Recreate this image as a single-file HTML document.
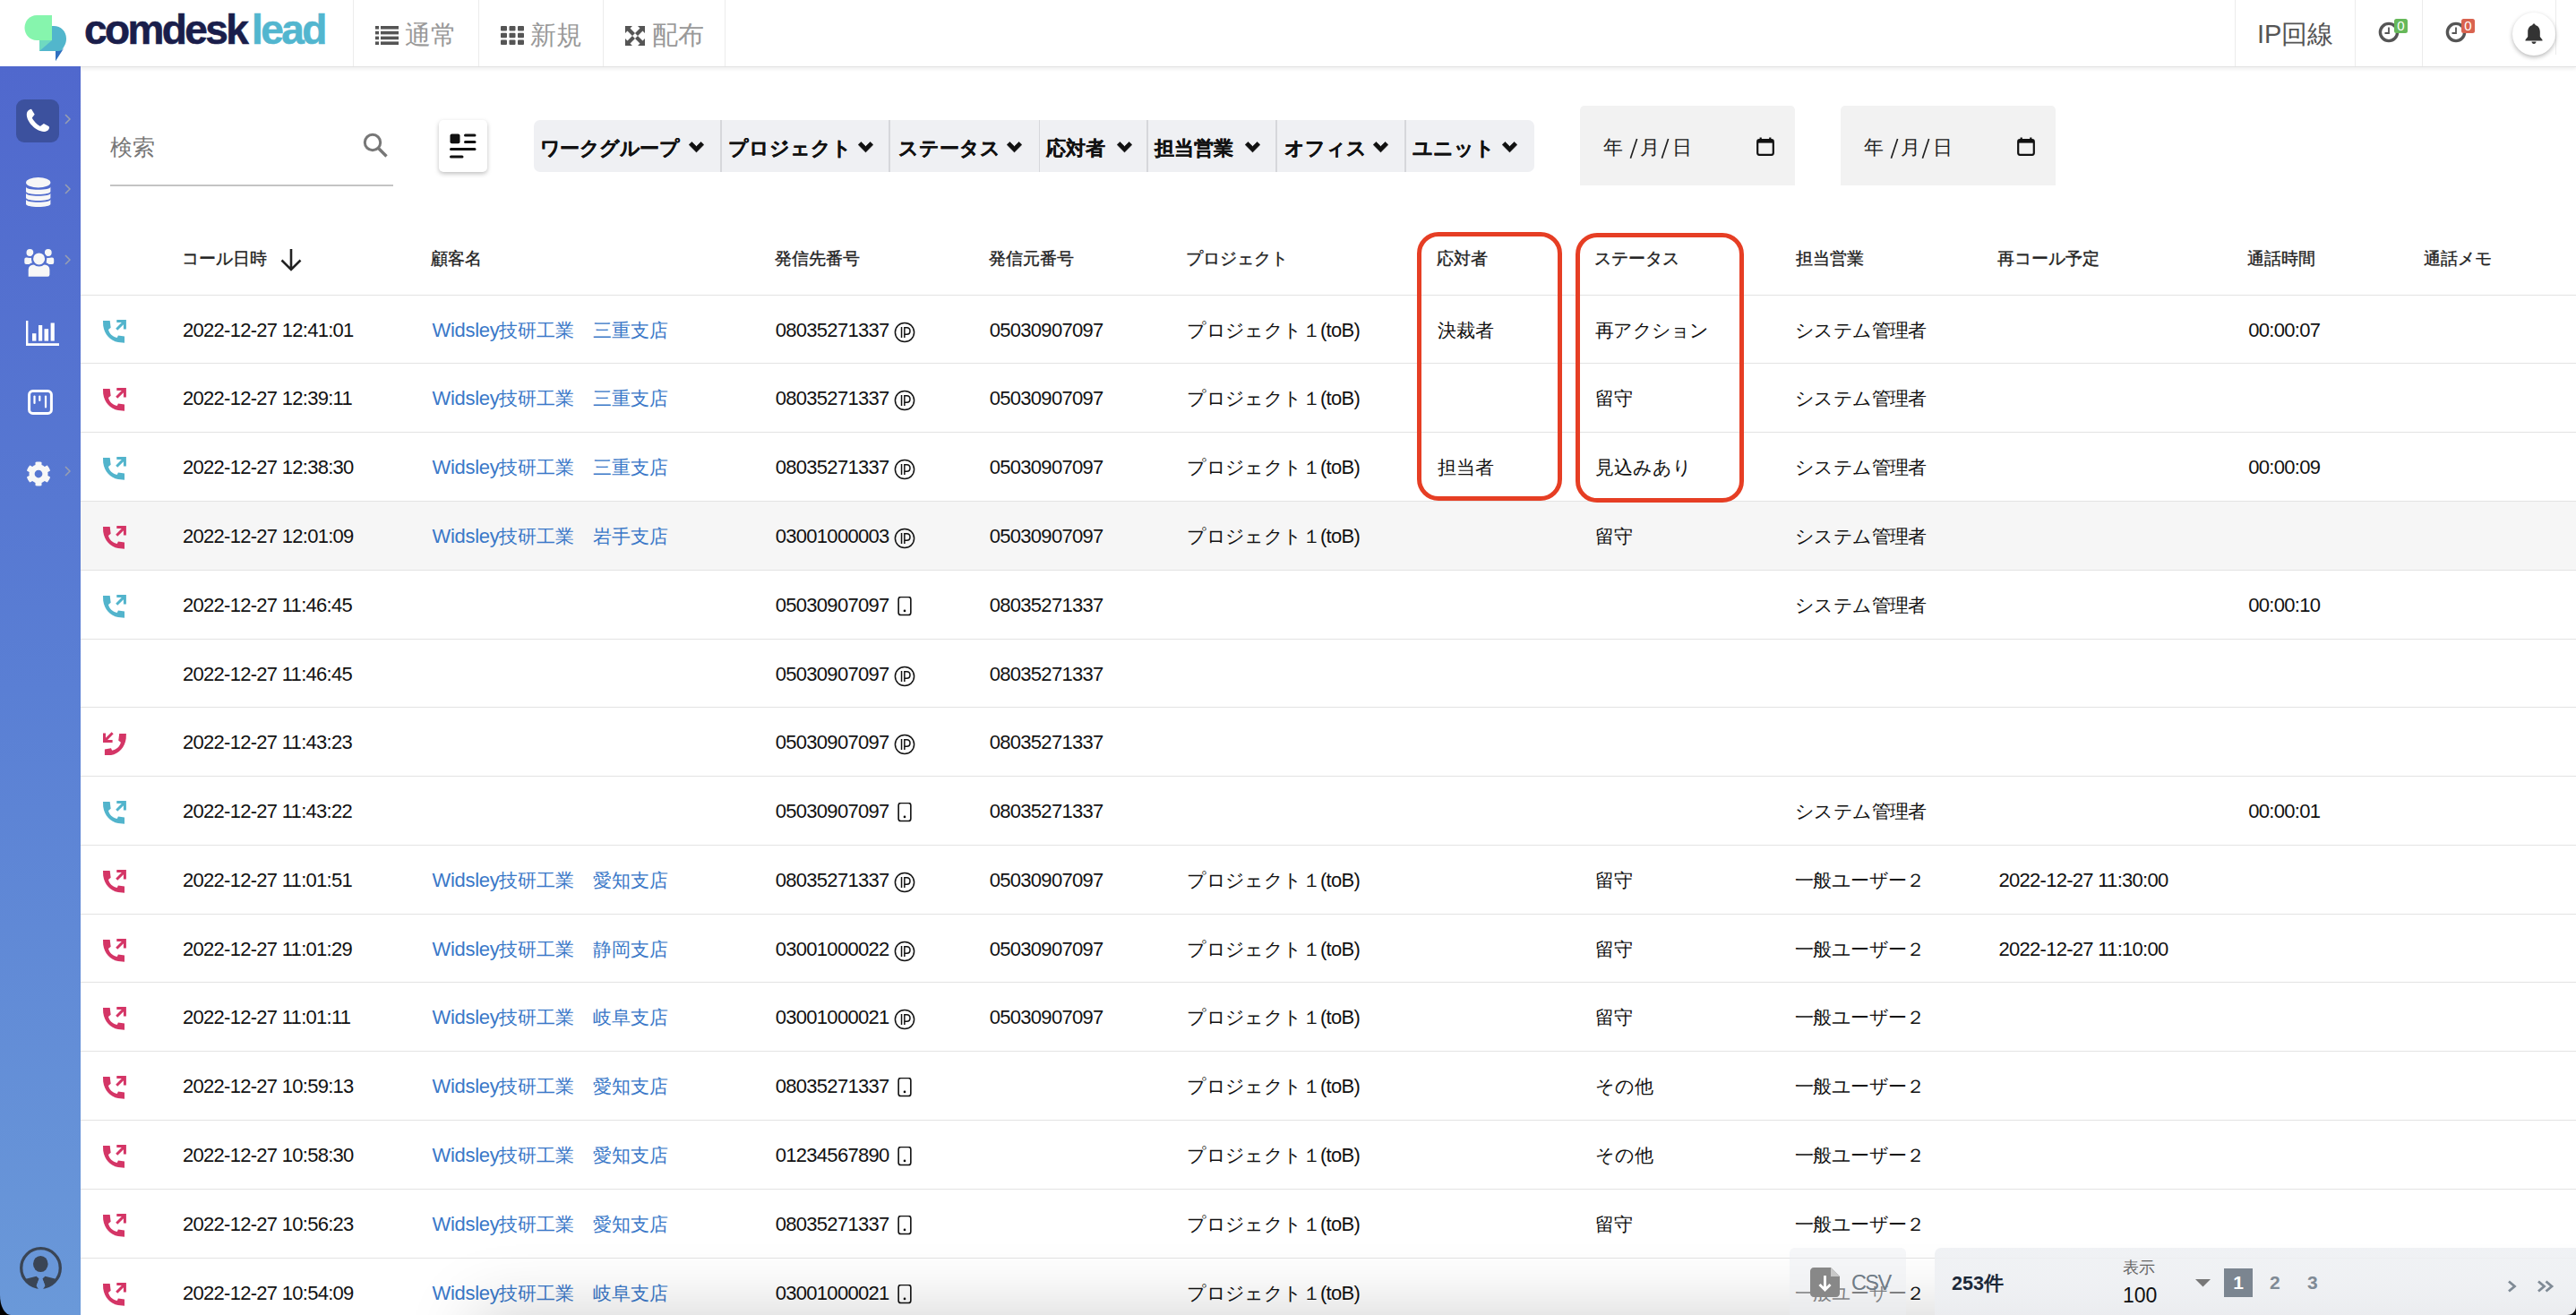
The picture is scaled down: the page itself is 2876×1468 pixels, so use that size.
<!DOCTYPE html>
<html lang="ja"><head><meta charset="utf-8"><title>comdesk lead</title>
<style>
*{box-sizing:border-box}
html,body{margin:0;padding:0;width:2876px;height:1468px;overflow:hidden;background:#fff;font-family:"Liberation Sans",sans-serif;color:#111}
.abs{position:absolute}
#hdr{position:absolute;left:0;top:0;width:2876px;height:75px;background:#fff;border-bottom:1px solid #e2e2e2;box-shadow:0 1.5px 4px rgba(0,0,0,.07);z-index:2}
.vsep{position:absolute;top:0;width:1px;height:74px;background:#ececec}
.nav{position:absolute;top:20px;font-size:28.8px;line-height:38px;color:#999}
#side{position:absolute;left:0;top:74px;width:90px;height:1394px;background:linear-gradient(180deg,#5068cd 0%,#5a7fd4 50%,#6a99d9 100%);border-bottom-left-radius:12px 22px;z-index:3}
#corner{position:absolute;left:0;top:1440px;width:30px;height:28px;background:#000;z-index:1}
.sico{position:absolute}
.schev{position:absolute;left:72px}
.th{position:absolute;top:276px;font-size:19px;line-height:26px;color:#222;white-space:nowrap;-webkit-text-stroke:0.35px #222;margin-left:-1.3px}
.row{position:absolute;left:90px;width:2786px;height:76.8px;border-top:1.5px solid #e3e3e3}
.row.hl{background:#f6f6f6}
.row .c{position:absolute;top:0;height:76.8px;line-height:77px;font-size:20.5px;white-space:nowrap;color:#111;margin-left:-90px}
.row .ico{position:absolute;top:27px;margin-left:-90px;width:26px;height:26px}
.row .ico svg{display:block}
.lk{color:#3a78c8}
.n{font-size:22px;letter-spacing:-0.72px}
.ic{vertical-align:middle;position:relative;top:0.5px}
.fl{position:absolute;top:148.5px;font-size:22px;line-height:34px;font-weight:700;color:#111;white-space:nowrap;-webkit-text-stroke:0.25px #111}
.chev{position:absolute;top:158px}
.fsep{position:absolute;top:134px;width:1.5px;height:58px;background:#d6d7db}
.dt{top:148px;font-size:22px;line-height:34px;color:#222}
.redbox{position:absolute;border:5.2px solid #e63e24;border-radius:24px;z-index:4}
</style></head><body>
<div id="hdr">
  <svg class="abs" style="left:27px;top:16px" width="48" height="54" viewBox="0 0 48 54">
    <path d="M44,13 C51,13 55,19 53,26" fill="none"/>
    <path fill="#52b6cc" d="M17,13 H33 C41,13 47,19 47,27 C47,31 46,33 45,35 L35,52 L35,41 H17 Z"/>
    <path fill="#2f6fc0" d="M35,41 H38 C41,41 44,39 45.5,36 L35,52 Z"/>
    <path fill="#86f5ad" d="M14,1 H31 V29 H14 C6,29 0.5,22.5 0.5,15 C0.5,7.5 6,1 14,1 Z"/>
    <path fill="#6fd9c0" d="M17,29 H31 L17,41 Z"/>
  </svg>
  <div class="abs" style="left:94px;top:3px;font-size:46px;line-height:60px;font-weight:700;color:#1a1e4b;letter-spacing:-2.6px;-webkit-text-stroke:0.6px #1a1e4b">comdesk</div>
  <div class="abs" style="left:281px;top:3px;font-size:46px;line-height:60px;font-weight:700;color:#52b6cf;letter-spacing:-2.6px;-webkit-text-stroke:0.6px #52b6cf">lead</div>
  <div class="vsep" style="left:394px"></div><div class="vsep" style="left:534px"></div><div class="vsep" style="left:673px"></div><div class="vsep" style="left:809px"></div>
  <svg class="abs" style="left:419px;top:29px" width="26" height="21" viewBox="0 0 26 21"><g fill="#555"><rect x="0" y="0" width="4" height="3.6"/><rect x="6" y="0" width="20" height="3.6"/><rect x="0" y="5.8" width="4" height="3.6"/><rect x="6" y="5.8" width="20" height="3.6"/><rect x="0" y="11.6" width="4" height="3.6"/><rect x="6" y="11.6" width="20" height="3.6"/><rect x="0" y="17.4" width="4" height="3.6"/><rect x="6" y="17.4" width="20" height="3.6"/></g></svg>
  <div class="nav" style="left:452px">通常</div>
  <svg class="abs" style="left:558.5px;top:29px" width="26" height="21" viewBox="0 0 26 21"><g fill="#555"><rect x="0" y="0" width="7" height="5.5" rx="1"/><rect x="9.5" y="0" width="7" height="5.5" rx="1"/><rect x="19" y="0" width="7" height="5.5" rx="1"/><rect x="0" y="7.7" width="7" height="5.5" rx="1"/><rect x="9.5" y="7.7" width="7" height="5.5" rx="1"/><rect x="19" y="7.7" width="7" height="5.5" rx="1"/><rect x="0" y="15.4" width="7" height="5.5" rx="1"/><rect x="9.5" y="15.4" width="7" height="5.5" rx="1"/><rect x="19" y="15.4" width="7" height="5.5" rx="1"/></g></svg>
  <div class="nav" style="left:592px">新規</div>
  <svg class="abs" style="left:698px;top:29px" width="22" height="22" viewBox="0 0 22 22"><g fill="#555"><path d="M0,0 H8 L5.5,2.5 L11,8 L8,11 L2.5,5.5 L0,8 Z"/><path d="M22,0 V8 L19.5,5.5 L14,11 L11,8 L16.5,2.5 L14,0 Z"/><path d="M0,22 V14 L2.5,16.5 L8,11 L11,14 L5.5,19.5 L8,22 Z"/><path d="M22,22 H14 L16.5,19.5 L11,14 L14,11 L19.5,16.5 L22,14 Z"/></g></svg>
  <div class="nav" style="left:728px">配布</div>

  <div class="vsep" style="left:2495px"></div><div class="vsep" style="left:2629px"></div><div class="vsep" style="left:2704px"></div><div class="vsep" style="left:2853px;height:61px"></div>
  <div class="abs" style="left:2520px;top:18px;font-size:29px;line-height:40px;color:#555">IP回線</div>
  <svg class="abs" style="left:2655px;top:24px" width="24" height="24" viewBox="0 0 24 24"><circle cx="12" cy="12" r="9.6" fill="none" stroke="#555" stroke-width="3.4"/><path d="M12,6.5 V13 H7.5" fill="none" stroke="#555" stroke-width="1.8"/></svg>
  <div class="abs" style="left:2673px;top:21px;width:15px;height:16px;background:#66b85a;border-radius:2.5px;color:#fff;font-size:15px;line-height:16px;text-align:center;font-weight:300">0</div>
  <svg class="abs" style="left:2730px;top:24px" width="24" height="24" viewBox="0 0 24 24"><circle cx="12" cy="12" r="9.6" fill="none" stroke="#555" stroke-width="3.4"/><path d="M12,6.5 V13 H7.5" fill="none" stroke="#555" stroke-width="1.8"/></svg>
  <div class="abs" style="left:2748px;top:21px;width:15px;height:16px;background:#d9634f;border-radius:2.5px;color:#fff;font-size:15px;line-height:16px;text-align:center">0</div>
  <div class="abs" style="left:2805px;top:14px;width:48px;height:48px;border-radius:50%;background:#fff;box-shadow:0 2px 5px rgba(0,0,0,.28)"></div>
  <svg class="abs" style="left:2818px;top:26px" width="22" height="24" viewBox="0 0 22 24"><path fill="#333" d="M11,0.5 C12,0.5 12.6,1.2 12.6,2 C16,2.8 17.8,5.8 17.8,9.5 V15 L20.5,18.5 V19.5 H1.5 V18.5 L4.2,15 V9.5 C4.2,5.8 6,2.8 9.4,2 C9.4,1.2 10,0.5 11,0.5 Z M8.5,20.5 H13.5 C13.5,22 12.4,23 11,23 C9.6,23 8.5,22 8.5,20.5 Z"/></svg>
</div>

<div id="corner"></div>
<div id="side">
  <div class="abs" style="left:18px;top:37px;width:48px;height:48px;border-radius:9px;background:#3c519e"></div>
  <svg class="sico" style="left:24px;top:42px" width="38" height="38" viewBox="0 0 38 38"><path fill="#fff" d="M11,5.8 L14.7,11.8 L11.8,15.6 C13,18.5 17.5,23.5 20.8,24.9 L24.9,22 L30.4,25 C31.4,25.8 31.2,27.6 30,28.9 C28.5,30.5 26.5,30.9 24.9,30.9 C16,30.9 5.8,20 5.8,12.1 C5.8,8.5 8,6.2 11,5.8 Z"/></svg>
  <svg class="sico" style="left:28.7px;top:124.4px" width="28" height="34" viewBox="0 0 28 34"><g fill="#f7f7f7"><ellipse cx="13.7" cy="5.75" rx="13.7" ry="5.75"/><path d="M0,10.6 C0,12.8 6,13.8 13.7,13.8 C21.4,13.8 27.4,12.8 27.4,10.6 V15.8 C27.4,17.8 21.4,19.0 13.7,19.0 C6,19.0 0,17.8 0,15.8 Z"/><path d="M0,17.6 C0,19.8 6,20.8 13.7,20.8 C21.4,20.8 27.4,19.8 27.4,17.6 V22.8 C27.4,24.8 21.4,26.0 13.7,26.0 C6,26.0 0,24.8 0,22.8 Z"/><path d="M0,24.6 C0,26.8 6,27.8 13.7,27.8 C21.4,27.8 27.4,26.8 27.4,24.6 V29.8 C27.4,31.8 21.4,33.0 13.7,33.0 C6,33.0 0,31.8 0,29.8 Z"/></g></svg>
  <svg class="sico" style="left:22px;top:198px" width="44" height="44" viewBox="0 0 44 44"><g fill="#f7f7f7" stroke="#5370cf" stroke-width="2.2"><rect x="4.2" y="14.4" width="10.8" height="9.6" rx="3"/><rect x="28.5" y="14.4" width="10.8" height="9.6" rx="3"/><circle cx="11.4" cy="10" r="5"/><circle cx="31.8" cy="10" r="5"/><path d="M8.6,37.9 V29 C8.6,25.1 11.7,22.3 15.4,22.3 H27.8 C31.5,22.3 34.5,25.1 34.5,29 V34.6 C34.5,36.4 33.1,37.9 31.3,37.9 Z"/><circle cx="21.6" cy="16.9" r="7.6"/></g></svg>
  <svg class="sico" style="left:28.5px;top:283.5px" width="37" height="28" viewBox="0 0 37 28"><g fill="#fff"><rect x="0" y="0" width="2.4" height="28"/><rect x="0" y="25.2" width="37" height="2.8"/><rect x="7" y="14.2" width="4.4" height="8.4"/><rect x="14" y="5" width="4.2" height="17.6"/><rect x="20.5" y="9.2" width="4.6" height="13.4"/><rect x="27.6" y="2.5" width="4.2" height="20.1"/></g></svg>
  <svg class="sico" style="left:31px;top:361px" width="28" height="28" viewBox="0 0 28 28"><rect x="1.6" y="1.6" width="24.8" height="24.8" rx="4" fill="none" stroke="#fff" stroke-width="3"/><g stroke="#fff" stroke-width="2.2" stroke-linecap="round"><path d="M7.5,7.5 V15"/><path d="M13.3,7.5 V12"/><path d="M20,7.5 V19.5"/></g></svg>
  <svg class="sico" style="left:28.5px;top:440.5px" width="28" height="28" viewBox="0 0 512 512"><path fill="#f7f7f7" d="M487.4 315.7l-42.6-24.6c4.3-23.2 4.3-47 0-70.2l42.6-24.6c4.9-2.8 7.1-8.6 5.5-14-11.1-35.6-30-67.8-54.7-94.6-3.8-4.1-10-5.1-14.8-2.3L380.8 110c-17.9-15.4-38.5-27.3-60.8-35.1V25.8c0-5.6-3.9-10.5-9.4-11.7-36.7-8.2-74.3-7.8-109.2 0-5.5 1.2-9.4 6.1-9.4 11.7V75c-22.2 7.9-42.8 19.8-60.8 35.1L88.7 85.5c-4.9-2.8-11-1.9-14.8 2.3-24.7 26.7-43.6 58.9-54.7 94.6-1.7 5.4.6 11.2 5.5 14L67.3 221c-4.3 23.2-4.3 47 0 70.2l-42.6 24.6c-4.9 2.8-7.1 8.6-5.5 14 11.1 35.6 30 67.8 54.7 94.6 3.8 4.1 10 5.1 14.8 2.3l42.6-24.6c17.9 15.4 38.5 27.3 60.8 35.1v49.2c0 5.6 3.9 10.5 9.4 11.7 36.7 8.2 74.3 7.8 109.2 0 5.5-1.2 9.4-6.1 9.4-11.7v-49.2c22.2-7.9 42.8-19.8 60.8-35.1l42.6 24.6c4.9 2.8 11 1.9 14.8-2.3 24.7-26.7 43.6-58.9 54.7-94.6 1.5-5.5-.7-11.3-5.6-14.1zM256 336c-44.1 0-80-35.9-80-80s35.9-80 80-80 80 35.9 80 80-35.9 80-80 80z"/></svg>
  <svg class="schev" style="top:53px" width="7" height="12" viewBox="0 0 7 12"><path d="M1,1 L6,6 L1,11" fill="none" stroke="#9aa0b0" stroke-width="1.5"/></svg>
  <svg class="schev" style="top:131px" width="7" height="12" viewBox="0 0 7 12"><path d="M1,1 L6,6 L1,11" fill="none" stroke="#9aa0b0" stroke-width="1.5"/></svg>
  <svg class="schev" style="top:210px" width="7" height="12" viewBox="0 0 7 12"><path d="M1,1 L6,6 L1,11" fill="none" stroke="#9aa0b0" stroke-width="1.5"/></svg>
  <svg class="schev" style="top:446px" width="7" height="12" viewBox="0 0 7 12"><path d="M1,1 L6,6 L1,11" fill="none" stroke="#9aa0b0" stroke-width="1.5"/></svg>
  <svg class="sico" style="left:22px;top:1318px" width="47" height="47" viewBox="0 0 47 47"><circle cx="23.5" cy="23.5" r="21.8" fill="none" stroke="#3a4555" stroke-width="3.3"/><ellipse cx="23.3" cy="19" rx="8.3" ry="9.1" fill="#3a4555"/><path fill="#3a4555" d="M6.7,35.7 L18.6,32.8 L21.6,35.4 L18.6,43.6 L21.2,46.6 A22,22 0 0 1 6.7,35.7 Z M40.3,35.7 L28.4,32.8 L25.4,35.4 L28.4,43.6 L25.8,46.6 A22,22 0 0 0 40.3,35.7 Z"/><path fill="#6a97d8" d="M21.6,35.4 H25.4 L28.4,43.6 L25.8,47.5 H21.2 L18.6,43.6 Z"/></svg>
</div>

<!-- search -->
<div class="abs" style="left:123px;top:146px;font-size:25px;line-height:36px;color:#777">検索</div>
<div class="abs" style="left:123px;top:206px;width:316px;height:2px;background:#c4c4c4"></div>
<svg class="abs" style="left:405px;top:148px" width="28" height="28" viewBox="0 0 28 28"><circle cx="11" cy="11" r="8.7" fill="none" stroke="#777" stroke-width="3"/><path d="M17.3,17.3 L26.5,26.5" stroke="#777" stroke-width="3.4"/></svg>
<div class="abs" style="left:490px;top:134px;width:54px;height:58px;border-radius:5px;background:#fff;box-shadow:0 2px 5px rgba(0,0,0,.25)"></div>
<svg class="abs" style="left:502px;top:148.5px" width="30" height="28" viewBox="0 0 30 28"><rect x="0.5" y="0.5" width="11" height="10.8" rx="2" fill="#111"/><g stroke="#111" stroke-width="3" stroke-linecap="round"><path d="M17.5,2 H28"/><path d="M17.5,9.5 H28"/><path d="M1.5,17.5 H28"/><path d="M1.5,26 H14"/></g></svg>

<!-- filter bar -->
<div class="abs" style="left:596px;top:134px;width:1116.5px;height:58px;border-radius:7px;background:#eff0f3"></div>
<div class="fl" style="left:602.5px;letter-spacing:-0.5px">ワークグループ</div><svg class="chev" style="left:769px" width="17" height="13" viewBox="0 0 17 13"><path d="M0.2,3.6 L3.4,0.4 L8.5,5.5 L13.6,0.4 L16.8,3.6 L8.5,11.9 Z" fill="#111" stroke="#111" stroke-width="0.6" stroke-linejoin="round"/></svg><div class="fl" style="left:813px;letter-spacing:0px">プロジェクト</div><svg class="chev" style="left:958px" width="17" height="13" viewBox="0 0 17 13"><path d="M0.2,3.6 L3.4,0.4 L8.5,5.5 L13.6,0.4 L16.8,3.6 L8.5,11.9 Z" fill="#111" stroke="#111" stroke-width="0.6" stroke-linejoin="round"/></svg><div class="fl" style="left:1003px;letter-spacing:0px">ステータス</div><svg class="chev" style="left:1124px" width="17" height="13" viewBox="0 0 17 13"><path d="M0.2,3.6 L3.4,0.4 L8.5,5.5 L13.6,0.4 L16.8,3.6 L8.5,11.9 Z" fill="#111" stroke="#111" stroke-width="0.6" stroke-linejoin="round"/></svg><div class="fl" style="left:1167.6px;letter-spacing:0px">応対者</div><svg class="chev" style="left:1246.5px" width="17" height="13" viewBox="0 0 17 13"><path d="M0.2,3.6 L3.4,0.4 L8.5,5.5 L13.6,0.4 L16.8,3.6 L8.5,11.9 Z" fill="#111" stroke="#111" stroke-width="0.6" stroke-linejoin="round"/></svg><div class="fl" style="left:1289px;letter-spacing:0px">担当営業</div><svg class="chev" style="left:1390px" width="17" height="13" viewBox="0 0 17 13"><path d="M0.2,3.6 L3.4,0.4 L8.5,5.5 L13.6,0.4 L16.8,3.6 L8.5,11.9 Z" fill="#111" stroke="#111" stroke-width="0.6" stroke-linejoin="round"/></svg><div class="fl" style="left:1434px;letter-spacing:0px">オフィス</div><svg class="chev" style="left:1533px" width="17" height="13" viewBox="0 0 17 13"><path d="M0.2,3.6 L3.4,0.4 L8.5,5.5 L13.6,0.4 L16.8,3.6 L8.5,11.9 Z" fill="#111" stroke="#111" stroke-width="0.6" stroke-linejoin="round"/></svg><div class="fl" style="left:1577.4px;letter-spacing:0px">ユニット</div><svg class="chev" style="left:1677px" width="17" height="13" viewBox="0 0 17 13"><path d="M0.2,3.6 L3.4,0.4 L8.5,5.5 L13.6,0.4 L16.8,3.6 L8.5,11.9 Z" fill="#111" stroke="#111" stroke-width="0.6" stroke-linejoin="round"/></svg><div class="fsep" style="left:804px"></div><div class="fsep" style="left:992px"></div><div class="fsep" style="left:1159.5px"></div><div class="fsep" style="left:1280px"></div><div class="fsep" style="left:1424px"></div><div class="fsep" style="left:1568.4px"></div>

<!-- dates -->
<div class="abs" style="left:1764px;top:118px;width:240px;height:89px;background:#f2f2f2;border-radius:5px 5px 0 0"></div>
<div class="abs dt" style="left:1790px">年</div><div class="abs dt" style="left:1830.5px">月</div><div class="abs dt" style="left:1867px">日</div><svg class="abs" style="left:1818px;top:154px" width="50" height="24" viewBox="0 0 50 24"><path d="M9.6,1 L2.4,22.7 M44.6,1 L37.4,22.7" stroke="#222" stroke-width="1.7"/></svg><svg class="abs" style="left:1960.5px;top:152.5px" width="20" height="21" viewBox="0 0 20 21"><rect x="1.2" y="3.2" width="17.6" height="16.6" rx="2" fill="none" stroke="#111" stroke-width="2.2"/><rect x="1" y="3" width="18" height="3.6" fill="#111"/><rect x="3.6" y="0.5" width="2.2" height="3" fill="#111"/><rect x="14.2" y="0.5" width="2.2" height="3" fill="#111"/></svg>
<div class="abs" style="left:2055px;top:118px;width:240px;height:89px;background:#f2f2f2;border-radius:5px 5px 0 0"></div>
<div class="abs dt" style="left:2081px">年</div><div class="abs dt" style="left:2121.5px">月</div><div class="abs dt" style="left:2158px">日</div><svg class="abs" style="left:2109px;top:154px" width="50" height="24" viewBox="0 0 50 24"><path d="M9.6,1 L2.4,22.7 M44.6,1 L37.4,22.7" stroke="#222" stroke-width="1.7"/></svg><svg class="abs" style="left:2251.5px;top:152.5px" width="20" height="21" viewBox="0 0 20 21"><rect x="1.2" y="3.2" width="17.6" height="16.6" rx="2" fill="none" stroke="#111" stroke-width="2.2"/><rect x="1" y="3" width="18" height="3.6" fill="#111"/><rect x="3.6" y="0.5" width="2.2" height="3" fill="#111"/><rect x="14.2" y="0.5" width="2.2" height="3" fill="#111"/></svg>

<!-- table header -->
<div class="th" style="left:204px">コール日時</div><div class="th" style="left:482.5px">顧客名</div><div class="th" style="left:865.8px">発信先番号</div><div class="th" style="left:1104.8px">発信元番号</div><div class="th" style="left:1325.2px">プロジェクト</div><div class="th" style="left:1605px">応対者</div><div class="th" style="left:1781.3px">ステータス</div><div class="th" style="left:2006.5px">担当営業</div><div class="th" style="left:2231.5px">再コール予定</div><div class="th" style="left:2510.3px">通話時間</div><div class="th" style="left:2707.7px">通話メモ</div>
<svg class="abs" style="left:312px;top:277px" width="26" height="26" viewBox="0 0 26 26"><path d="M13,1 V24 M2.5,13.5 L13,24 L23.5,13.5" fill="none" stroke="#222" stroke-width="2.6"/></svg>

<div class="row" style="top:328.6px"><div class="ico" style="left:115px"><svg width="26" height="26" viewBox="0 0 26 26"><path fill="#52b4cc" d="M0,1 L7.7,1.1 L8.4,6.8 L8.7,8.7 L6,10.9 C7,15 10.5,19 15.8,19.9 L16.9,17.4 L24,18.5 L24,25.7 L16.9,25.1 C8,23.5 1.5,16 0.2,6.5 Z"/><path fill="#52b4cc" d="M15.3,0 H25.9 V10.6 H22.9 V5.2 L16.3,11.8 L14.2,9.7 L20.8,3 H15.3 Z"/></svg></div><div class="c " style="left:204px"><span class="n">2022-12-27 12:41:01</span></div><div class="c " style="left:482.5px"><span class="lk"><span class="n" style="letter-spacing:-0.3px">Widsley</span>技研工業　三重支店</span></div><div class="c " style="left:865.8px"><span class="n">08035271337 </span><svg class="ic" width="24" height="24" viewBox="0 0 24 24"><circle cx="12" cy="12" r="10.6" fill="none" stroke="#111" stroke-width="1.5"/><path d="M8.55,5.9 V18 M11.85,18 V6.65 H14.3 C17.6,6.65 18,8.3 18,10.5 C18,12.7 17.2,14.3 14.3,14.3 H11.85" fill="none" stroke="#111" stroke-width="1.5"/></svg></div><div class="c " style="left:1104.8px"><span class="n">05030907097</span></div><div class="c " style="left:1325.2px"><span style="letter-spacing:-0.6px">プロジェクト１</span><span class="n">(toB)</span></div><div class="c " style="left:1605px">決裁者</div><div class="c " style="left:1781.3px"><span style="letter-spacing:-0.8px">再アクション</span></div><div class="c " style="left:2004.0px"><span style="letter-spacing:-0.6px">システム管理者</span></div><div class="c " style="left:2510.3px"><span class="n">00:00:07</span></div></div><div class="row" style="top:405.4px"><div class="ico" style="left:115px"><svg width="26" height="26" viewBox="0 0 26 26"><path fill="#d43566" d="M0,1 L7.7,1.1 L8.4,6.8 L8.7,8.7 L6,10.9 C7,15 10.5,19 15.8,19.9 L16.9,17.4 L24,18.5 L24,25.7 L16.9,25.1 C8,23.5 1.5,16 0.2,6.5 Z"/><path fill="#d43566" d="M15.3,0 H25.9 V10.6 H22.9 V5.2 L16.3,11.8 L14.2,9.7 L20.8,3 H15.3 Z"/></svg></div><div class="c " style="left:204px"><span class="n">2022-12-27 12:39:11</span></div><div class="c " style="left:482.5px"><span class="lk"><span class="n" style="letter-spacing:-0.3px">Widsley</span>技研工業　三重支店</span></div><div class="c " style="left:865.8px"><span class="n">08035271337 </span><svg class="ic" width="24" height="24" viewBox="0 0 24 24"><circle cx="12" cy="12" r="10.6" fill="none" stroke="#111" stroke-width="1.5"/><path d="M8.55,5.9 V18 M11.85,18 V6.65 H14.3 C17.6,6.65 18,8.3 18,10.5 C18,12.7 17.2,14.3 14.3,14.3 H11.85" fill="none" stroke="#111" stroke-width="1.5"/></svg></div><div class="c " style="left:1104.8px"><span class="n">05030907097</span></div><div class="c " style="left:1325.2px"><span style="letter-spacing:-0.6px">プロジェクト１</span><span class="n">(toB)</span></div><div class="c " style="left:1781.3px">留守</div><div class="c " style="left:2004.0px"><span style="letter-spacing:-0.6px">システム管理者</span></div></div><div class="row" style="top:482.2px"><div class="ico" style="left:115px"><svg width="26" height="26" viewBox="0 0 26 26"><path fill="#52b4cc" d="M0,1 L7.7,1.1 L8.4,6.8 L8.7,8.7 L6,10.9 C7,15 10.5,19 15.8,19.9 L16.9,17.4 L24,18.5 L24,25.7 L16.9,25.1 C8,23.5 1.5,16 0.2,6.5 Z"/><path fill="#52b4cc" d="M15.3,0 H25.9 V10.6 H22.9 V5.2 L16.3,11.8 L14.2,9.7 L20.8,3 H15.3 Z"/></svg></div><div class="c " style="left:204px"><span class="n">2022-12-27 12:38:30</span></div><div class="c " style="left:482.5px"><span class="lk"><span class="n" style="letter-spacing:-0.3px">Widsley</span>技研工業　三重支店</span></div><div class="c " style="left:865.8px"><span class="n">08035271337 </span><svg class="ic" width="24" height="24" viewBox="0 0 24 24"><circle cx="12" cy="12" r="10.6" fill="none" stroke="#111" stroke-width="1.5"/><path d="M8.55,5.9 V18 M11.85,18 V6.65 H14.3 C17.6,6.65 18,8.3 18,10.5 C18,12.7 17.2,14.3 14.3,14.3 H11.85" fill="none" stroke="#111" stroke-width="1.5"/></svg></div><div class="c " style="left:1104.8px"><span class="n">05030907097</span></div><div class="c " style="left:1325.2px"><span style="letter-spacing:-0.6px">プロジェクト１</span><span class="n">(toB)</span></div><div class="c " style="left:1605px">担当者</div><div class="c " style="left:1781.3px">見込みあり</div><div class="c " style="left:2004.0px"><span style="letter-spacing:-0.6px">システム管理者</span></div><div class="c " style="left:2510.3px"><span class="n">00:00:09</span></div></div><div class="row hl" style="top:558.9px"><div class="ico" style="left:115px"><svg width="26" height="26" viewBox="0 0 26 26"><path fill="#d43566" d="M0,1 L7.7,1.1 L8.4,6.8 L8.7,8.7 L6,10.9 C7,15 10.5,19 15.8,19.9 L16.9,17.4 L24,18.5 L24,25.7 L16.9,25.1 C8,23.5 1.5,16 0.2,6.5 Z"/><path fill="#d43566" d="M15.3,0 H25.9 V10.6 H22.9 V5.2 L16.3,11.8 L14.2,9.7 L20.8,3 H15.3 Z"/></svg></div><div class="c " style="left:204px"><span class="n">2022-12-27 12:01:09</span></div><div class="c " style="left:482.5px"><span class="lk"><span class="n" style="letter-spacing:-0.3px">Widsley</span>技研工業　岩手支店</span></div><div class="c " style="left:865.8px"><span class="n">03001000003 </span><svg class="ic" width="24" height="24" viewBox="0 0 24 24"><circle cx="12" cy="12" r="10.6" fill="none" stroke="#111" stroke-width="1.5"/><path d="M8.55,5.9 V18 M11.85,18 V6.65 H14.3 C17.6,6.65 18,8.3 18,10.5 C18,12.7 17.2,14.3 14.3,14.3 H11.85" fill="none" stroke="#111" stroke-width="1.5"/></svg></div><div class="c " style="left:1104.8px"><span class="n">05030907097</span></div><div class="c " style="left:1325.2px"><span style="letter-spacing:-0.6px">プロジェクト１</span><span class="n">(toB)</span></div><div class="c " style="left:1781.3px">留守</div><div class="c " style="left:2004.0px"><span style="letter-spacing:-0.6px">システム管理者</span></div></div><div class="row" style="top:635.7px"><div class="ico" style="left:115px"><svg width="26" height="26" viewBox="0 0 26 26"><path fill="#52b4cc" d="M0,1 L7.7,1.1 L8.4,6.8 L8.7,8.7 L6,10.9 C7,15 10.5,19 15.8,19.9 L16.9,17.4 L24,18.5 L24,25.7 L16.9,25.1 C8,23.5 1.5,16 0.2,6.5 Z"/><path fill="#52b4cc" d="M15.3,0 H25.9 V10.6 H22.9 V5.2 L16.3,11.8 L14.2,9.7 L20.8,3 H15.3 Z"/></svg></div><div class="c " style="left:204px"><span class="n">2022-12-27 11:46:45</span></div><div class="c " style="left:865.8px"><span class="n">05030907097 </span><svg class="ic" width="24" height="24" viewBox="0 0 24 24"><rect x="5.15" y="0.4" width="13.7" height="20.1" rx="2.6" fill="none" stroke="#111" stroke-width="1.6"/><circle cx="12" cy="15.9" r="1.35" fill="#111"/></svg></div><div class="c " style="left:1104.8px"><span class="n">08035271337</span></div><div class="c " style="left:2004.0px"><span style="letter-spacing:-0.6px">システム管理者</span></div><div class="c " style="left:2510.3px"><span class="n">00:00:10</span></div></div><div class="row" style="top:712.5px"><div class="c " style="left:204px"><span class="n">2022-12-27 11:46:45</span></div><div class="c " style="left:865.8px"><span class="n">05030907097 </span><svg class="ic" width="24" height="24" viewBox="0 0 24 24"><circle cx="12" cy="12" r="10.6" fill="none" stroke="#111" stroke-width="1.5"/><path d="M8.55,5.9 V18 M11.85,18 V6.65 H14.3 C17.6,6.65 18,8.3 18,10.5 C18,12.7 17.2,14.3 14.3,14.3 H11.85" fill="none" stroke="#111" stroke-width="1.5"/></svg></div><div class="c " style="left:1104.8px"><span class="n">08035271337</span></div></div><div class="row" style="top:789.3px"><div class="ico" style="left:115px"><svg width="26" height="26" viewBox="0 0 26 26"><path fill="#d43566" transform="translate(25.9,0.9) scale(-1,1)" d="M0,1 L7.7,1.1 L8.4,6.8 L8.7,8.7 L6,10.9 C7,15 10.5,19 15.8,19.9 L16.9,17.4 L24,18.5 L24,25.7 L16.9,25.1 C8,23.5 1.5,16 0.2,6.5 Z"/><path fill="#d43566" d="M10.6,12 H0 V1.4 H3 V6.8 L9.6,0.2 L11.7,2.3 L5.1,9 H10.6 Z"/></svg></div><div class="c " style="left:204px"><span class="n">2022-12-27 11:43:23</span></div><div class="c " style="left:865.8px"><span class="n">05030907097 </span><svg class="ic" width="24" height="24" viewBox="0 0 24 24"><circle cx="12" cy="12" r="10.6" fill="none" stroke="#111" stroke-width="1.5"/><path d="M8.55,5.9 V18 M11.85,18 V6.65 H14.3 C17.6,6.65 18,8.3 18,10.5 C18,12.7 17.2,14.3 14.3,14.3 H11.85" fill="none" stroke="#111" stroke-width="1.5"/></svg></div><div class="c " style="left:1104.8px"><span class="n">08035271337</span></div></div><div class="row" style="top:866.1px"><div class="ico" style="left:115px"><svg width="26" height="26" viewBox="0 0 26 26"><path fill="#52b4cc" d="M0,1 L7.7,1.1 L8.4,6.8 L8.7,8.7 L6,10.9 C7,15 10.5,19 15.8,19.9 L16.9,17.4 L24,18.5 L24,25.7 L16.9,25.1 C8,23.5 1.5,16 0.2,6.5 Z"/><path fill="#52b4cc" d="M15.3,0 H25.9 V10.6 H22.9 V5.2 L16.3,11.8 L14.2,9.7 L20.8,3 H15.3 Z"/></svg></div><div class="c " style="left:204px"><span class="n">2022-12-27 11:43:22</span></div><div class="c " style="left:865.8px"><span class="n">05030907097 </span><svg class="ic" width="24" height="24" viewBox="0 0 24 24"><rect x="5.15" y="0.4" width="13.7" height="20.1" rx="2.6" fill="none" stroke="#111" stroke-width="1.6"/><circle cx="12" cy="15.9" r="1.35" fill="#111"/></svg></div><div class="c " style="left:1104.8px"><span class="n">08035271337</span></div><div class="c " style="left:2004.0px"><span style="letter-spacing:-0.6px">システム管理者</span></div><div class="c " style="left:2510.3px"><span class="n">00:00:01</span></div></div><div class="row" style="top:942.8px"><div class="ico" style="left:115px"><svg width="26" height="26" viewBox="0 0 26 26"><path fill="#d43566" d="M0,1 L7.7,1.1 L8.4,6.8 L8.7,8.7 L6,10.9 C7,15 10.5,19 15.8,19.9 L16.9,17.4 L24,18.5 L24,25.7 L16.9,25.1 C8,23.5 1.5,16 0.2,6.5 Z"/><path fill="#d43566" d="M15.3,0 H25.9 V10.6 H22.9 V5.2 L16.3,11.8 L14.2,9.7 L20.8,3 H15.3 Z"/></svg></div><div class="c " style="left:204px"><span class="n">2022-12-27 11:01:51</span></div><div class="c " style="left:482.5px"><span class="lk"><span class="n" style="letter-spacing:-0.3px">Widsley</span>技研工業　愛知支店</span></div><div class="c " style="left:865.8px"><span class="n">08035271337 </span><svg class="ic" width="24" height="24" viewBox="0 0 24 24"><circle cx="12" cy="12" r="10.6" fill="none" stroke="#111" stroke-width="1.5"/><path d="M8.55,5.9 V18 M11.85,18 V6.65 H14.3 C17.6,6.65 18,8.3 18,10.5 C18,12.7 17.2,14.3 14.3,14.3 H11.85" fill="none" stroke="#111" stroke-width="1.5"/></svg></div><div class="c " style="left:1104.8px"><span class="n">05030907097</span></div><div class="c " style="left:1325.2px"><span style="letter-spacing:-0.6px">プロジェクト１</span><span class="n">(toB)</span></div><div class="c " style="left:1781.3px">留守</div><div class="c " style="left:2004.0px"><span style="letter-spacing:-0.6px">一般ユーザー２</span></div><div class="c " style="left:2231.5px"><span class="n">2022-12-27 11:30:00</span></div></div><div class="row" style="top:1019.6px"><div class="ico" style="left:115px"><svg width="26" height="26" viewBox="0 0 26 26"><path fill="#d43566" d="M0,1 L7.7,1.1 L8.4,6.8 L8.7,8.7 L6,10.9 C7,15 10.5,19 15.8,19.9 L16.9,17.4 L24,18.5 L24,25.7 L16.9,25.1 C8,23.5 1.5,16 0.2,6.5 Z"/><path fill="#d43566" d="M15.3,0 H25.9 V10.6 H22.9 V5.2 L16.3,11.8 L14.2,9.7 L20.8,3 H15.3 Z"/></svg></div><div class="c " style="left:204px"><span class="n">2022-12-27 11:01:29</span></div><div class="c " style="left:482.5px"><span class="lk"><span class="n" style="letter-spacing:-0.3px">Widsley</span>技研工業　静岡支店</span></div><div class="c " style="left:865.8px"><span class="n">03001000022 </span><svg class="ic" width="24" height="24" viewBox="0 0 24 24"><circle cx="12" cy="12" r="10.6" fill="none" stroke="#111" stroke-width="1.5"/><path d="M8.55,5.9 V18 M11.85,18 V6.65 H14.3 C17.6,6.65 18,8.3 18,10.5 C18,12.7 17.2,14.3 14.3,14.3 H11.85" fill="none" stroke="#111" stroke-width="1.5"/></svg></div><div class="c " style="left:1104.8px"><span class="n">05030907097</span></div><div class="c " style="left:1325.2px"><span style="letter-spacing:-0.6px">プロジェクト１</span><span class="n">(toB)</span></div><div class="c " style="left:1781.3px">留守</div><div class="c " style="left:2004.0px"><span style="letter-spacing:-0.6px">一般ユーザー２</span></div><div class="c " style="left:2231.5px"><span class="n">2022-12-27 11:10:00</span></div></div><div class="row" style="top:1096.4px"><div class="ico" style="left:115px"><svg width="26" height="26" viewBox="0 0 26 26"><path fill="#d43566" d="M0,1 L7.7,1.1 L8.4,6.8 L8.7,8.7 L6,10.9 C7,15 10.5,19 15.8,19.9 L16.9,17.4 L24,18.5 L24,25.7 L16.9,25.1 C8,23.5 1.5,16 0.2,6.5 Z"/><path fill="#d43566" d="M15.3,0 H25.9 V10.6 H22.9 V5.2 L16.3,11.8 L14.2,9.7 L20.8,3 H15.3 Z"/></svg></div><div class="c " style="left:204px"><span class="n">2022-12-27 11:01:11</span></div><div class="c " style="left:482.5px"><span class="lk"><span class="n" style="letter-spacing:-0.3px">Widsley</span>技研工業　岐阜支店</span></div><div class="c " style="left:865.8px"><span class="n">03001000021 </span><svg class="ic" width="24" height="24" viewBox="0 0 24 24"><circle cx="12" cy="12" r="10.6" fill="none" stroke="#111" stroke-width="1.5"/><path d="M8.55,5.9 V18 M11.85,18 V6.65 H14.3 C17.6,6.65 18,8.3 18,10.5 C18,12.7 17.2,14.3 14.3,14.3 H11.85" fill="none" stroke="#111" stroke-width="1.5"/></svg></div><div class="c " style="left:1104.8px"><span class="n">05030907097</span></div><div class="c " style="left:1325.2px"><span style="letter-spacing:-0.6px">プロジェクト１</span><span class="n">(toB)</span></div><div class="c " style="left:1781.3px">留守</div><div class="c " style="left:2004.0px"><span style="letter-spacing:-0.6px">一般ユーザー２</span></div></div><div class="row" style="top:1173.2px"><div class="ico" style="left:115px"><svg width="26" height="26" viewBox="0 0 26 26"><path fill="#d43566" d="M0,1 L7.7,1.1 L8.4,6.8 L8.7,8.7 L6,10.9 C7,15 10.5,19 15.8,19.9 L16.9,17.4 L24,18.5 L24,25.7 L16.9,25.1 C8,23.5 1.5,16 0.2,6.5 Z"/><path fill="#d43566" d="M15.3,0 H25.9 V10.6 H22.9 V5.2 L16.3,11.8 L14.2,9.7 L20.8,3 H15.3 Z"/></svg></div><div class="c " style="left:204px"><span class="n">2022-12-27 10:59:13</span></div><div class="c " style="left:482.5px"><span class="lk"><span class="n" style="letter-spacing:-0.3px">Widsley</span>技研工業　愛知支店</span></div><div class="c " style="left:865.8px"><span class="n">08035271337 </span><svg class="ic" width="24" height="24" viewBox="0 0 24 24"><rect x="5.15" y="0.4" width="13.7" height="20.1" rx="2.6" fill="none" stroke="#111" stroke-width="1.6"/><circle cx="12" cy="15.9" r="1.35" fill="#111"/></svg></div><div class="c " style="left:1325.2px"><span style="letter-spacing:-0.6px">プロジェクト１</span><span class="n">(toB)</span></div><div class="c " style="left:1781.3px">その他</div><div class="c " style="left:2004.0px"><span style="letter-spacing:-0.6px">一般ユーザー２</span></div></div><div class="row" style="top:1250.0px"><div class="ico" style="left:115px"><svg width="26" height="26" viewBox="0 0 26 26"><path fill="#d43566" d="M0,1 L7.7,1.1 L8.4,6.8 L8.7,8.7 L6,10.9 C7,15 10.5,19 15.8,19.9 L16.9,17.4 L24,18.5 L24,25.7 L16.9,25.1 C8,23.5 1.5,16 0.2,6.5 Z"/><path fill="#d43566" d="M15.3,0 H25.9 V10.6 H22.9 V5.2 L16.3,11.8 L14.2,9.7 L20.8,3 H15.3 Z"/></svg></div><div class="c " style="left:204px"><span class="n">2022-12-27 10:58:30</span></div><div class="c " style="left:482.5px"><span class="lk"><span class="n" style="letter-spacing:-0.3px">Widsley</span>技研工業　愛知支店</span></div><div class="c " style="left:865.8px"><span class="n">01234567890 </span><svg class="ic" width="24" height="24" viewBox="0 0 24 24"><rect x="5.15" y="0.4" width="13.7" height="20.1" rx="2.6" fill="none" stroke="#111" stroke-width="1.6"/><circle cx="12" cy="15.9" r="1.35" fill="#111"/></svg></div><div class="c " style="left:1325.2px"><span style="letter-spacing:-0.6px">プロジェクト１</span><span class="n">(toB)</span></div><div class="c " style="left:1781.3px">その他</div><div class="c " style="left:2004.0px"><span style="letter-spacing:-0.6px">一般ユーザー２</span></div></div><div class="row" style="top:1326.7px"><div class="ico" style="left:115px"><svg width="26" height="26" viewBox="0 0 26 26"><path fill="#d43566" d="M0,1 L7.7,1.1 L8.4,6.8 L8.7,8.7 L6,10.9 C7,15 10.5,19 15.8,19.9 L16.9,17.4 L24,18.5 L24,25.7 L16.9,25.1 C8,23.5 1.5,16 0.2,6.5 Z"/><path fill="#d43566" d="M15.3,0 H25.9 V10.6 H22.9 V5.2 L16.3,11.8 L14.2,9.7 L20.8,3 H15.3 Z"/></svg></div><div class="c " style="left:204px"><span class="n">2022-12-27 10:56:23</span></div><div class="c " style="left:482.5px"><span class="lk"><span class="n" style="letter-spacing:-0.3px">Widsley</span>技研工業　愛知支店</span></div><div class="c " style="left:865.8px"><span class="n">08035271337 </span><svg class="ic" width="24" height="24" viewBox="0 0 24 24"><rect x="5.15" y="0.4" width="13.7" height="20.1" rx="2.6" fill="none" stroke="#111" stroke-width="1.6"/><circle cx="12" cy="15.9" r="1.35" fill="#111"/></svg></div><div class="c " style="left:1325.2px"><span style="letter-spacing:-0.6px">プロジェクト１</span><span class="n">(toB)</span></div><div class="c " style="left:1781.3px">留守</div><div class="c " style="left:2004.0px"><span style="letter-spacing:-0.6px">一般ユーザー２</span></div></div><div class="row" style="top:1403.5px"><div class="ico" style="left:115px"><svg width="26" height="26" viewBox="0 0 26 26"><path fill="#d43566" d="M0,1 L7.7,1.1 L8.4,6.8 L8.7,8.7 L6,10.9 C7,15 10.5,19 15.8,19.9 L16.9,17.4 L24,18.5 L24,25.7 L16.9,25.1 C8,23.5 1.5,16 0.2,6.5 Z"/><path fill="#d43566" d="M15.3,0 H25.9 V10.6 H22.9 V5.2 L16.3,11.8 L14.2,9.7 L20.8,3 H15.3 Z"/></svg></div><div class="c " style="left:204px"><span class="n">2022-12-27 10:54:09</span></div><div class="c " style="left:482.5px"><span class="lk"><span class="n" style="letter-spacing:-0.3px">Widsley</span>技研工業　岐阜支店</span></div><div class="c " style="left:865.8px"><span class="n">03001000021 </span><svg class="ic" width="24" height="24" viewBox="0 0 24 24"><rect x="5.15" y="0.4" width="13.7" height="20.1" rx="2.6" fill="none" stroke="#111" stroke-width="1.6"/><circle cx="12" cy="15.9" r="1.35" fill="#111"/></svg></div><div class="c " style="left:1325.2px"><span style="letter-spacing:-0.6px">プロジェクト１</span><span class="n">(toB)</span></div><div class="c " style="left:2004.0px"><span style="letter-spacing:-0.6px">一般ユーザー２</span></div></div>
<div class="abs" style="left:90px;top:1480.3px;width:2786px;height:2px;border-top:1.5px solid #e3e3e3"></div>

<div class="redbox" style="left:1581.5px;top:259.3px;width:162.5px;height:300px"></div>
<div class="redbox" style="left:1759.4px;top:259.5px;width:187.2px;height:301.2px"></div>

<!-- footer -->
<div class="abs" style="left:560px;top:1492px;width:2400px;height:200px;box-shadow:0 0 70px 30px rgba(0,0,0,.17);z-index:5"></div>
<div class="abs" style="left:1998px;top:1393px;width:130px;height:80px;border-radius:6px;background:rgba(236,238,241,.5);z-index:6"></div>
<svg class="abs" style="left:2021px;top:1415px;z-index:7" width="33" height="33" viewBox="0 0 33 33"><path fill="#888" d="M4,0 H23 L33,10 V29 C33,31.2 31.2,33 29,33 H4 C1.8,33 0,31.2 0,29 V4 C0,1.8 1.8,0 4,0 Z"/><path fill="#c8c8c8" d="M23,0 L33,10 H23 Z"/><path d="M16.5,9 V25 M10.5,19 L16.5,25 L22.5,19" fill="none" stroke="#fff" stroke-width="3"/></svg>
<div class="abs" style="left:2067px;top:1415px;font-size:23.5px;line-height:34px;color:#6f7b86;letter-spacing:-1.6px;z-index:7">CSV</div>
<div class="abs" style="left:2160px;top:1393px;width:716px;height:80px;border-radius:7px 0 0 0;background:linear-gradient(180deg,rgba(238,240,243,.9),rgba(236,238,242,.72));z-index:6"></div>
<div class="abs" style="left:2179px;top:1416px;font-size:21.5px;line-height:34px;font-weight:700;color:#1b2838;z-index:7">253件</div>
<div class="abs" style="left:2370px;top:1402px;font-size:18px;line-height:26px;color:#666;z-index:7">表示</div>
<div class="abs" style="left:2370px;top:1431px;font-size:23px;line-height:30px;color:#111;z-index:7">100</div>
<svg class="abs" style="left:2451px;top:1427.5px;z-index:7" width="17" height="9" viewBox="0 0 17 9"><path d="M0,0 H17 L8.5,8.5 Z" fill="#777"/></svg>
<div class="abs" style="left:2483px;top:1416px;width:32px;height:32px;background:#7b8590;color:#fff;font-weight:700;font-size:21px;line-height:32px;text-align:center;z-index:7">1</div>
<div class="abs" style="left:2534px;top:1416px;font-size:21px;line-height:32px;font-weight:700;color:#7f8a95;z-index:7">2</div>
<div class="abs" style="left:2576px;top:1416px;font-size:21px;line-height:32px;font-weight:700;color:#7f8a95;z-index:7">3</div>
<svg class="abs" style="left:2799px;top:1429px;z-index:7" width="11" height="14" viewBox="0 0 11 14"><path d="M2,1.5 L8.5,7 L2,12.5" fill="none" stroke="#7f8a95" stroke-width="2.8"/></svg>
<svg class="abs" style="left:2832px;top:1429px;z-index:7" width="20" height="14" viewBox="0 0 20 14"><path d="M2,1.5 L8.5,7 L2,12.5 M10.5,1.5 L17,7 L10.5,12.5" fill="none" stroke="#7f8a95" stroke-width="2.8"/></svg>
<svg class="abs" style="left:2866px;top:1458px;z-index:8" width="10" height="10" viewBox="0 0 10 10"><path d="M10,0 V10 H0 C6,10 10,6 10,0 Z" fill="#111"/></svg>
</body></html>
